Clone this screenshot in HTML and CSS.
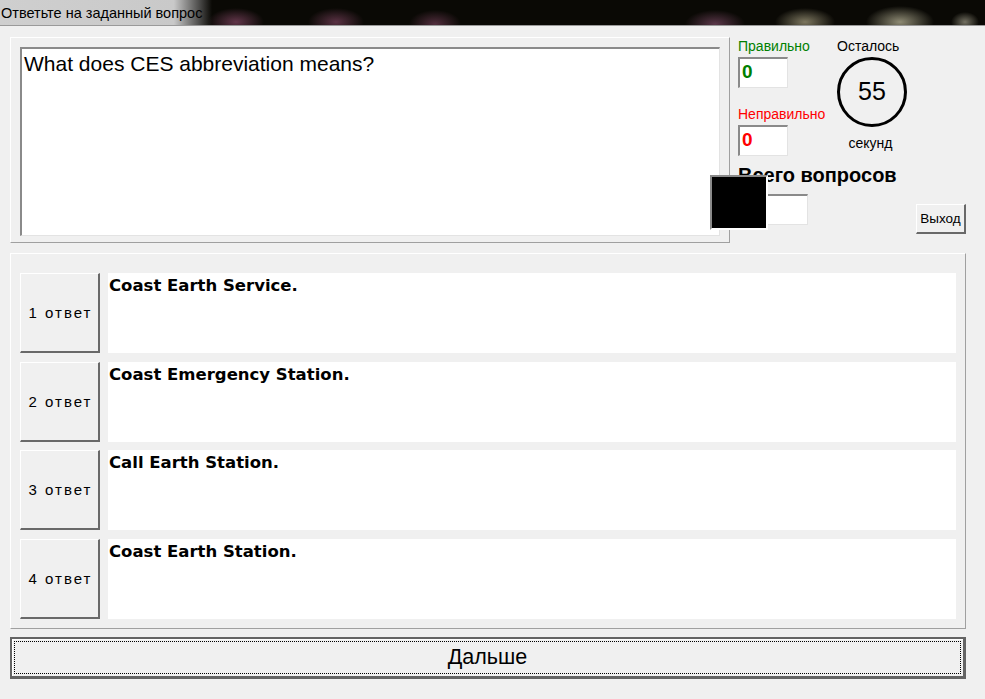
FILE: index.html
```html
<!DOCTYPE html>
<html lang="ru">
<head>
<meta charset="utf-8">
<title>Ответьте на заданный вопрос</title>
<link rel="stylesheet" href="styles.css">
</head>
<body>
<div class="titlebar"><span class="title-glow">Ответьте на заданный вопрос</span></div>
<div class="window">
  <div class="top-row">
    <div class="q-panel">
      <div class="q-box">What does CES abbreviation means?</div>
    </div>
    <div class="stats">
      <div class="stats-top">
        <div class="counts">
          <div class="lbl lbl-green">Правильно</div>
          <div class="field field-green">0</div>
          <div class="lbl lbl-red">Неправильно</div>
          <div class="field field-red">0</div>
        </div>
        <div class="timer">
          <div class="lbl lbl-left">Осталось</div>
          <div class="circle">55</div>
          <div class="sec">секунд</div>
        </div>
      </div>
      <div class="total-lbl">Всего вопросов</div>
      <div class="total-row">
        <div class="field field-total"></div>
        <button class="btn-exit">Выход</button>
      </div>
    </div>
    <div class="black-sq"></div>
  </div>
  <div class="a-panel">
    <div class="a-row"><button class="a-btn">1 ответ</button><div class="a-text">Coast Earth Service.</div></div>
    <div class="a-row"><button class="a-btn">2 ответ</button><div class="a-text">Coast Emergency Station.</div></div>
    <div class="a-row"><button class="a-btn">3 ответ</button><div class="a-text">Call Earth Station.</div></div>
    <div class="a-row"><button class="a-btn">4 ответ</button><div class="a-text">Coast Earth Station.</div></div>
  </div>
  <button class="next-btn"><span class="focus-rect">Дальше</span></button>
</div>
</body>
</html>
```
FILE: styles.css
```css
html, body {
  margin: 0;
  padding: 0;
}
body {
  background: #f0f0f0;
  width: 985px;
  height: 699px;
  overflow: hidden;
  font-family: "Liberation Sans", Arial, sans-serif;
  color: #000;
}
.titlebar {
  height: 25px;
  border-bottom: 1px solid #9a9a9a;
  background:
    radial-gradient(ellipse 28px 14px at 236px 22px, rgba(170,90,130,0.55), transparent),
    radial-gradient(ellipse 28px 14px at 336px 22px, rgba(170,90,130,0.5), transparent),
    radial-gradient(ellipse 26px 14px at 435px 24px, rgba(170,90,130,0.45), transparent),
    radial-gradient(ellipse 30px 14px at 715px 24px, rgba(170,100,140,0.5), transparent),
    radial-gradient(ellipse 30px 14px at 805px 22px, rgba(220,210,170,0.55), transparent),
    radial-gradient(ellipse 34px 16px at 900px 22px, rgba(230,225,190,0.6), transparent),
    radial-gradient(ellipse 14px 10px at 965px 22px, rgba(220,215,190,0.5), transparent),
    #0a0905;
  display: flex;
  align-items: center;
}
.title-glow {
  height: 25px;
  line-height: 27px;
  padding: 0 10px 0 1px;
  font-size: 14.5px;
  color: #000;
  background: linear-gradient(90deg, #cfcfcf 0%, #c9c9c9 82%, rgba(120,120,120,0.6) 94%, rgba(10,9,5,0) 100%);
}
.window {
  padding: 11px 19px 0 10px;
}
.top-row {
  display: flex;
  position: relative;
  height: 206px;
}
.q-panel {
  width: 700px;
  height: 186px;
  border: 1px solid;
  border-color: #fff #a0a0a0 #a0a0a0 #fff;
  padding: 9px;
  box-sizing: content-box;
  flex: none;
}
.q-box {
  height: 182px;
  background: #fff;
  border-style: solid;
  border-width: 2px 1px 1px 2px;
  border-color: #8a8a8a #e3e3e3 #e3e3e3 #8a8a8a;
  padding: 2px 2px;
  font-size: 21px;
  line-height: 26px;
}
.stats {
  margin-left: 8px;
  width: 228px;
  display: flex;
  flex-direction: column;
}
.stats-top {
  display: flex;
}
.counts {
  width: 99px;
  display: flex;
  flex-direction: column;
}
.lbl {
  font-size: 14px;
  line-height: 16px;
  height: 16px;
  margin-top: 1px;
  white-space: nowrap;
}
.lbl-left { align-self: flex-start; }
.lbl-green { color: #008000; }
.lbl-red { color: #ff0000; margin-top: 18px; }
.field {
  box-sizing: border-box;
  width: 50px;
  height: 31px;
  margin-top: 3px;
  background: #fff;
  border-style: solid;
  border-width: 2px 1px 1px 2px;
  border-color: #8a8a8a #e3e3e3 #e3e3e3 #8a8a8a;
  font-weight: bold;
  font-size: 19px;
  line-height: 26px;
  padding-left: 2px;
}
.field-green { color: #008000; }
.field-red { color: #ff0000; }
.timer {
  width: 70px;
  display: flex;
  flex-direction: column;
  align-items: center;
}
.circle {
  box-sizing: border-box;
  width: 70px;
  height: 70px;
  margin-top: 3px;
  border: 3px solid #000;
  border-radius: 50%;
  display: flex;
  align-items: center;
  justify-content: center;
  font-size: 25px;
  padding-bottom: 2px;
}
.sec {
  font-size: 14px;
  margin-top: 8px;
  margin-right: 3px;
}
.total-lbl {
  font-weight: bold;
  font-size: 20px;
  line-height: 22px;
  margin-top: 8px;
}
.total-row {
  display: flex;
  align-items: flex-start;
  justify-content: space-between;
  margin-top: 6px;
}
.field-total {
  width: 70px;
  margin-top: 2px;
}
.btn-exit {
  width: 50px;
  height: 30px;
  margin-top: 12px;
  padding: 0;
  background: #f0f0f0;
  border-style: solid;
  border-width: 1px 2px 2px 1px;
  border-color: #fff #696969 #696969 #fff;
  font-family: "Liberation Sans", Arial, sans-serif;
  font-size: 13.5px;
  color: #000;
}
.black-sq {
  position: absolute;
  left: 700px;
  top: 138px;
  width: 58px;
  height: 55px;
  box-sizing: border-box;
  background: #000;
  border-style: solid;
  border-width: 2px;
  border-color: #8a8a8a #fff #fff #8a8a8a;
}
.a-panel {
  margin-top: 10px;
  height: 355px;
  border: 1px solid;
  border-color: #fff #a0a0a0 #a0a0a0 #fff;
  padding: 19px 9px 0 9px;
  display: flex;
  flex-direction: column;
  gap: 8.7px;
}
.a-row {
  display: flex;
  gap: 8px;
  height: 80px;
  flex: none;
}
.a-btn {
  width: 80px;
  height: 80px;
  padding: 0 0 0 2px;
  flex: none;
  background: #f0f0f0;
  border-style: solid;
  border-width: 1px 2px 2px 1px;
  border-color: #fff #696969 #696969 #fff;
  font-family: "Liberation Sans", Arial, sans-serif;
  font-size: 15px;
  letter-spacing: 2px;
  color: #000;
}
.a-text {
  flex: 1;
  background: #fff;
  font-family: "DejaVu Sans", "Liberation Sans", sans-serif;
  font-weight: bold;
  font-size: 16.5px;
  line-height: 24px;
  padding: 1px 1px 0;
}
.next-btn {
  display: block;
  width: 956px;
  height: 42px;
  margin-top: 8px;
  padding: 0;
  background: #f0f0f0;
  border-style: solid;
  border-width: 2px 3px 3px 2px;
  border-color: #646464;
  box-shadow: inset 1px 1px #fff;
  font-family: "Liberation Sans", Arial, sans-serif;
  font-size: 21.5px;
  color: #000;
}
.focus-rect {
  display: flex;
  align-items: center;
  justify-content: center;
  margin: 2px;
  height: 31px;
  border: 1px dotted #000;
}
```
